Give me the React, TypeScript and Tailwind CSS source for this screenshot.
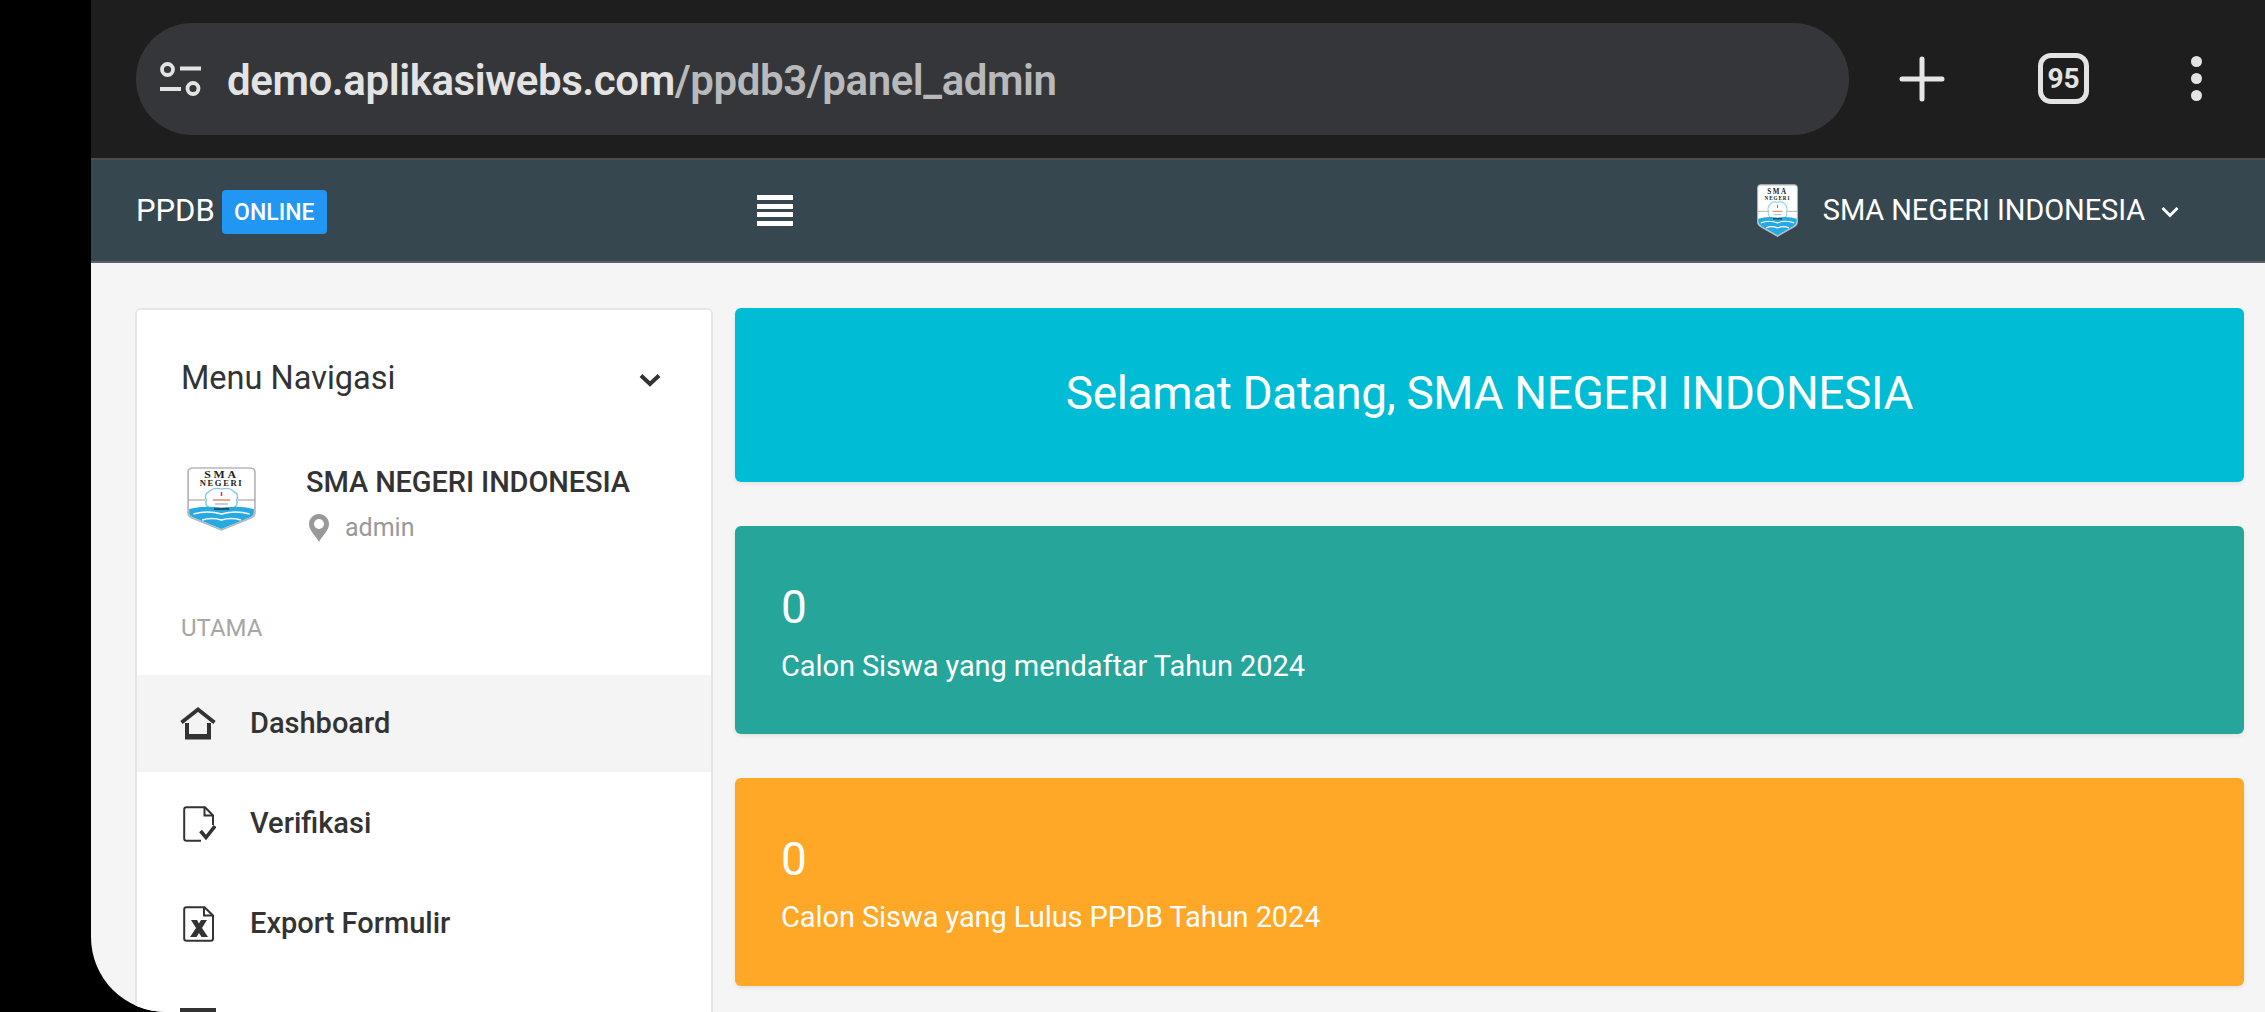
const Logo = ({ className }: { className: string }) => (
  <svg viewBox="3 0 64 64" preserveAspectRatio="none" className={className}>
    <path d="M4 5 Q4 1 9 1 H61 Q66 1 66 5 V46 Q66 50 60 52 L35 63 L10 52 Q4 50 4 46 Z" fill="#fff" stroke="#b5b8ba" strokeWidth="1.600" />
    <text x="35" y="11.500" textAnchor="middle" fontFamily="'Liberation Serif', serif" fontWeight="700" fontSize="11" letterSpacing="2.500" fill="#222">SMA</text>
    <text x="35" y="19" textAnchor="middle" fontFamily="'Liberation Serif', serif" fontWeight="700" fontSize="8" letterSpacing="1.500" fill="#222">NEGERI</text>
    <path d="M4 33 H20 M50 33 H66" stroke="#999" strokeWidth="1" />
    <path d="M24 24 Q28 20 35 22 Q42 20 46 24 Q52 28 49 33 Q51 38 46 41 H24 Q19 38 21 33 Q18 28 24 24 Z" fill="#fff" stroke="#7fc9e6" strokeWidth="1.300" />
    <path d="M35 25 V29" stroke="#b84a3a" strokeWidth="1.400" />
    <path d="M27 33 H43" stroke="#c9503c" strokeWidth="1" />
    <path d="M29 37 H41" stroke="#999" strokeWidth="1" />
    <path d="M5 42 Q20 38 35 41 Q50 38 65 42 V46 Q65 49 60 51 L35 62 L10 51 Q5 49 5 46 Z" fill="#27a9e1" />
    <path d="M28 42 H42" stroke="#1f3a4a" strokeWidth="1.500" />
    <path d="M9 47 Q22 43 35 47 Q48 43 61 47 M17 53 Q26 50 35 53 Q44 50 53 53" stroke="#fff" strokeWidth="1.400" fill="none" />
  </svg>
);

const HomeIcon = () => (
  <svg viewBox="0 0 36 33" className="h-[33px] w-[36px]" fill="none">
    <path d="M1.500 15.500 L18 2.500 L34.500 15.500" stroke="#333" strokeWidth="3.800" strokeLinejoin="miter" />
    <path d="M5 16 H9 V27 H27 V16 H31 V32.500 H5 Z" fill="#333" />
  </svg>
);

const CheckDoc = () => (
  <svg viewBox="0 0 33 36" className="ml-[3px] h-[36px] w-[33px]" fill="none" stroke="#333">
    <path d="M18 34.800 H3.500 Q1.200 34.800 1.200 32.500 V3.500 Q1.200 1.200 3.500 1.200 H22 L30 9.500 V19" strokeWidth="2" />
    <path d="M21.500 1.500 V9.500 H30" strokeWidth="2" />
    <path d="M17.500 25 L23 31.500 L32 20" strokeWidth="3.600" />
  </svg>
);

const ExcelDoc = () => (
  <svg viewBox="0 0 31 36" className="ml-[3px] h-[36px] w-[31px]" fill="none" stroke="#333">
    <path d="M3.500 1.200 H21.500 L30 9.500 V32.500 Q30 34.800 27.700 34.800 H3.500 Q1.200 34.800 1.200 32.500 V3.500 Q1.200 1.200 3.500 1.200 Z" strokeWidth="2" />
    <path d="M21 1.500 V9.500 H30" strokeWidth="2" />
    <path d="M8 14 H14 L16 17.500 L18 14 H24 L19 22 L25 31 H18.500 L16 27 L13.500 31 H7 L13 22 Z" fill="#333" stroke="none" />
  </svg>
);

const menu = [
  { label: "Dashboard", icon: <HomeIcon />, active: true },
  { label: "Verifikasi", icon: <CheckDoc />, active: false },
  { label: "Export Formulir", icon: <ExcelDoc />, active: false },
];

export default function App() {
  return (
    <div className="flex h-screen w-full overflow-hidden bg-black font-['Roboto',sans-serif]">
      <div className="ml-[91px] flex h-full flex-1 flex-col overflow-hidden rounded-bl-[75px] bg-[#f5f5f5]">
        <div className="flex h-[158px] shrink-0 items-center bg-[#1e1e1e] pb-[1px] pl-[45px]">
          <div className="flex h-[112px] w-[1713px] items-center rounded-full bg-[#35363a] pl-[24px]">
            <svg viewBox="0 0 41 34" className="h-[34px] w-[41px]" fill="none" stroke="#e3e3e3" strokeWidth="3.800">
              <circle cx="7.500" cy="7.500" r="5.500" />
              <path d="M20 6.500 H41 M0 27 H21" />
              <circle cx="33" cy="26.500" r="5.500" />
            </svg>
            <span className="ml-[26px] mt-[3px] text-[42px] font-semibold tracking-[-0.42px] text-[#e3e3e3]">
              demo.aplikasiwebs.com<span className="text-[#b8b9ba]">/ppdb3/panel_admin</span>
            </span>
          </div>
          <svg viewBox="0 0 46 46" className="ml-[50px] h-[46px] w-[46px]" stroke="#e6e6e6" strokeWidth="5" strokeLinecap="round">
            <path d="M23 3 V43 M3 23 H43" />
          </svg>
          <div className="ml-[93px] flex h-[51px] w-[51px] items-center justify-center rounded-[13px] border-[5px] border-[#e3e3e3] text-[28px] font-bold text-[#e3e3e3]">
            95
          </div>
          <div className="ml-[102px] flex flex-col gap-[6px]">
            <div className="h-[11px] w-[11px] rounded-full bg-[#e3e3e3]" />
            <div className="h-[11px] w-[11px] rounded-full bg-[#e3e3e3]" />
            <div className="h-[11px] w-[11px] rounded-full bg-[#e3e3e3]" />
          </div>
        </div>

        <div className="flex h-[105px] shrink-0 items-center border-t-[2px] border-b-[2px] border-t-[#494e50] border-b-[#55646b] bg-[#37474f] pl-[45px] text-white">
          <span className="text-[31px] leading-none">PPDB</span>
          <span className="ml-[7px] mt-[3px] flex h-[44px] w-[105px] items-center justify-center rounded-[4px] bg-[#2196f3] pt-[2px] text-[23px] font-medium">ONLINE</span>
          <div className="ml-[430px] flex w-[36px] flex-col gap-[3.500px]">
            <div className="h-[5px] bg-white" />
            <div className="h-[5px] bg-white" />
            <div className="h-[5px] bg-white" />
            <div className="h-[5px] bg-white" />
          </div>
          <Logo className="ml-[964px] h-[53px] w-[41px]" />
          <span className="ml-[25px] text-[29px] leading-none tracking-[-0.1px]">SMA NEGERI INDONESIA</span>
          <svg viewBox="0 0 18 12" className="ml-[16px] mt-[2px] h-[12px] w-[18px]" fill="none" stroke="#fff" strokeWidth="2.800">
            <path d="M1.500 2 L9 9.500 L16.500 2" />
          </svg>
        </div>

        <div className="flex min-h-0 flex-1 gap-[22px] pt-[45px] pl-[44px] pr-[21px]">
          <div className="w-[578px] shrink-0 rounded-t-[6px] border-x-2 border-t-2 border-[#e6e6e6] bg-white">
            <div className="flex items-center justify-between pt-[50px] pl-[44px] pr-[50px]">
              <span className="text-[32.500px] leading-[36px] text-[#333]">Menu Navigasi</span>
              <svg viewBox="0 0 22 14" className="mt-[4px] h-[14px] w-[22px]" fill="none" stroke="#333" strokeWidth="4">
                <path d="M2 2.500 L11 11 L20 2.500" />
              </svg>
            </div>
            <div className="mt-[74px] flex pl-[50px]">
              <Logo className="mt-[-3px] h-[64px] w-[69px]" />
              <div className="ml-[50px]">
                <div className="mt-[-6px] text-[29px] leading-[36px] font-medium tracking-[-0.12px] text-[#333]">SMA NEGERI INDONESIA</div>
                <div className="mt-[13px] flex items-center">
                  <svg viewBox="0 0 20 28" className="ml-[3px] h-[28px] w-[20px]" fill="#999">
                    <path fillRule="evenodd" d="M10 0 C4.500 0 0 4.500 0 10 C0 16.500 7 22 10 28 C13 22 20 16.500 20 10 C20 4.500 15.500 0 10 0 Z M10 5 A5 5 0 1 1 10 15 A5 5 0 1 1 10 5 Z" />
                  </svg>
                  <span className="ml-[16px] text-[25px] leading-[30px] text-[#999]">admin</span>
                </div>
              </div>
            </div>
            <div className="mt-[71px] pl-[44px] text-[24px] leading-[28px] text-[#a6a6a6]">UTAMA</div>
            <div className="mt-[33px]">
              {menu.map((m) => (
                <div key={m.label} className={`mb-[3px] flex h-[97px] items-center ${m.active ? "bg-[#f4f4f4]" : ""}`}>
                  <div className="flex w-[113px] shrink-0 justify-start pl-[43px]">{m.icon}</div>
                  <span className="text-[29px] font-medium text-[#333]">{m.label}</span>
                </div>
              ))}
              <div className="flex h-[97px] items-start pt-[33px] pl-[43px]">
                <div className="h-[36px] w-[36px] border-t-[7px] border-[#333]" />
              </div>
            </div>
          </div>

          <div className="flex min-w-0 flex-1 flex-col gap-[44px]">
            <div className="flex h-[174px] items-center justify-center rounded-[6px] bg-[#00bcd4] pb-[3px] text-[46px] tracking-[-0.38px] text-white shadow-[0_2px_4px_rgba(0,0,0,0.08)]">
              Selamat Datang, SMA NEGERI INDONESIA
            </div>
            <div className="flex h-[208px] flex-col rounded-[6px] bg-[#26a69a] pt-[54px] pl-[46px] text-white shadow-[0_2px_4px_rgba(0,0,0,0.08)]">
              <div className="text-[46px] leading-[54px]">0</div>
              <div className="mt-[14px] text-[29px] leading-[36px] tracking-[-0.08px]">Calon Siswa yang mendaftar Tahun 2024</div>
            </div>
            <div className="flex h-[208px] flex-col rounded-[6px] bg-[#ffa726] pt-[54px] pl-[46px] text-white shadow-[0_2px_4px_rgba(0,0,0,0.08)]">
              <div className="text-[46px] leading-[54px]">0</div>
              <div className="mt-[13px] text-[29px] leading-[36px] tracking-[-0.08px]">Calon Siswa yang Lulus PPDB Tahun 2024</div>
            </div>
          </div>
        </div>
      </div>
    </div>
  );
}
